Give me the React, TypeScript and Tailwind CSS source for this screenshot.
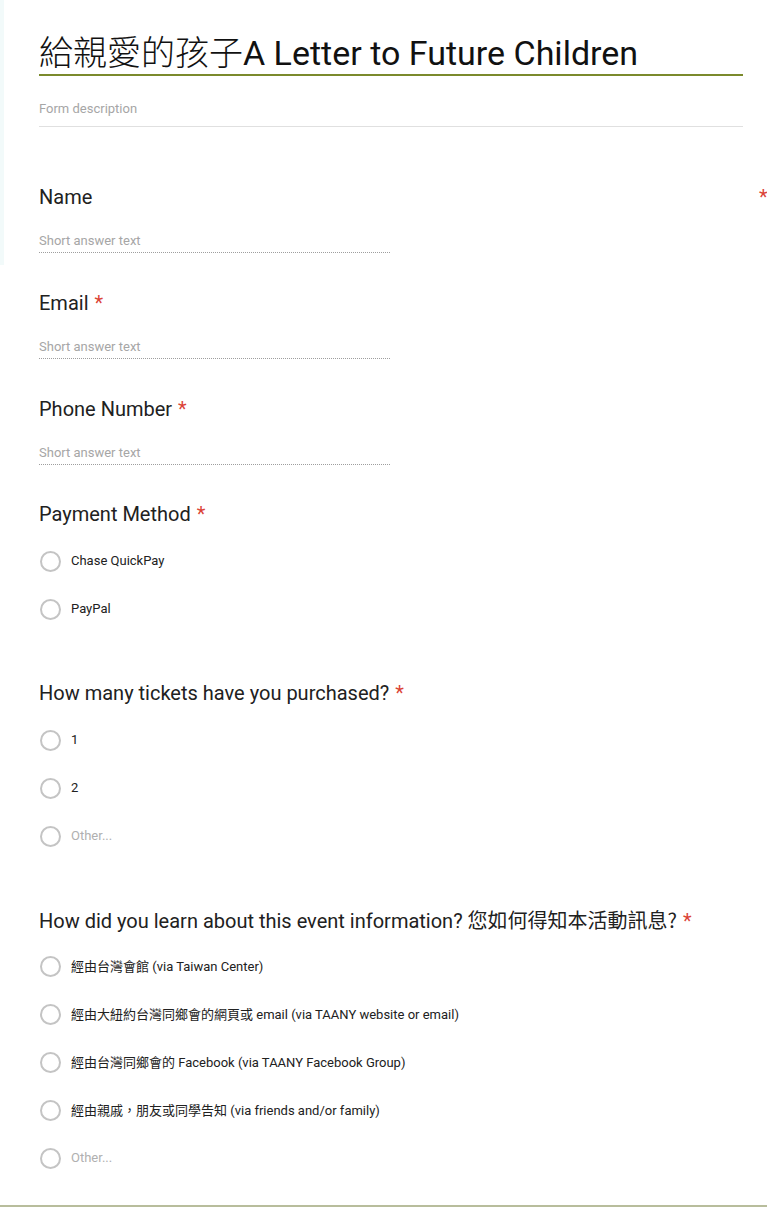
const ShortQuestion = ({ label, required }: { label: string; required?: boolean }) => (
  <div className="w-[351px]">
    <div className="text-[20px] leading-[24px] text-[#212121]">
      {label}
      {required && <span className="ml-[6px] text-[#db4437]">*</span>}
    </div>
    <div className="mt-[24px] pb-[3px] border-b border-dotted border-[#9e9e9e] text-[13px] leading-[16px] text-[#a6a6a6]">
      Short answer text
    </div>
  </div>
);

const Radio = ({ text, muted }: { text: React.ReactNode; muted?: boolean }) => (
  <div className="h-12 flex items-center">
    <span className="ml-px w-[21px] h-[21px] rounded-full border-2 border-[#c4c4c4]" />
    <span className={`ml-[10px] text-[13px] ${muted ? "text-[#b0b0b0]" : "text-[#212121]"}`}>{text}</span>
  </div>
);

const ChoiceQuestion = ({
  label,
  options,
  gapClass,
}: {
  label: React.ReactNode;
  options: { text: React.ReactNode; muted?: boolean }[];
  gapClass: string;
}) => (
  <div>
    <div className="text-[20px] leading-[24px] text-[#212121]">
      {label}
      <span className="ml-[6px] text-[#db4437]">*</span>
    </div>
    <div className={gapClass}>
      {options.map((o, i) => (
        <Radio key={i} text={o.text} muted={o.muted} />
      ))}
    </div>
  </div>
);

const cjk = "font-['Noto_Sans_CJK_TC',sans-serif]";

export default function App() {
  return (
    <div className="relative min-h-[1207px] bg-white font-['Roboto','Noto_Sans_CJK_TC',sans-serif] border-b-2 border-[#b8bd9c]">
      <div className="absolute left-0 top-0 w-[4px] h-[265px] bg-[#f2fafa]" />
      <span className="absolute left-[759px] top-[182px] text-[20px] text-[#db4437]">*</span>

      <div className="pl-[39px] pr-[24px] pt-[30px]">
        <h1 className="text-[34px] leading-[42px] text-[#111] border-b-2 border-[#7b8a2c] whitespace-nowrap">
          <span className={`${cjk} font-light`}>給親愛的孩子</span>A Letter to Future Children
        </h1>
        <div className="mt-[25px] pb-[9px] border-b border-[#e0e0e0] text-[13px] leading-[16px] text-[#a6a6a6]">
          Form description
        </div>

        <div className="mt-[58px] flex flex-col gap-[38px]">
          <ShortQuestion label="Name" />
          <ShortQuestion label="Email" required />
          <ShortQuestion label="Phone Number" required />
        </div>

        <div className="mt-[37px] flex flex-col gap-[48px]">
          <ChoiceQuestion
            label="Payment Method"
            gapClass="mt-[11px]"
            options={[{ text: "Chase QuickPay" }, { text: "PayPal" }]}
          />
          <ChoiceQuestion
            label="How many tickets have you purchased?"
            gapClass="mt-[11px]"
            options={[{ text: "1" }, { text: "2" }, { text: "Other...", muted: true }]}
          />
          <ChoiceQuestion
            label={
              <>
                How did you learn about this event information? <span className={cjk}>您如何得知本活動訊息?</span>
              </>
            }
            gapClass="mt-[9px]"
            options={[
              { text: <><span className={cjk}>經由台灣會館</span> (via Taiwan Center)</> },
              { text: <><span className={cjk}>經由大紐約台灣同鄉會的網頁或</span> email (via TAANY website or email)</> },
              { text: <><span className={cjk}>經由台灣同鄉會的</span> Facebook (via TAANY Facebook Group)</> },
              { text: <><span className={cjk}>經由親戚，朋友或同學告知</span> (via friends and/or family)</> },
              { text: "Other...", muted: true },
            ]}
          />
        </div>
      </div>
    </div>
  );
}
